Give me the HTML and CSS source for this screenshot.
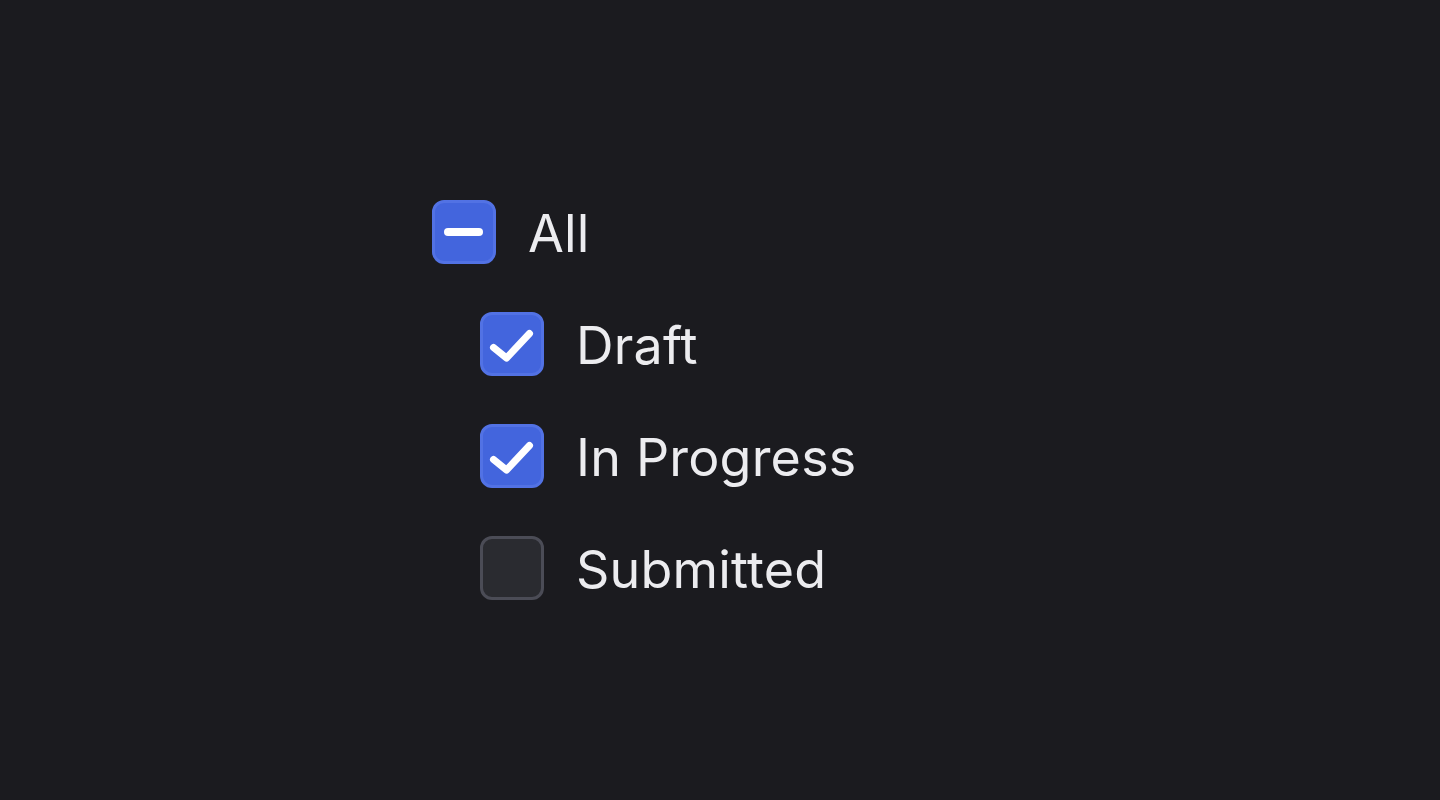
FILE: index.html
```html
<!DOCTYPE html>
<html lang="en">
<head>
<meta charset="utf-8">
<title>Checkbox group</title>
<link rel="stylesheet" href="styles.css">
</head>
<body>
<div class="page">
  <div class="group">
    <label class="row">
      <span class="box box-on">
        <svg viewBox="0 0 64 64" width="64" height="64"><rect x="12" y="28" width="39" height="8" rx="4" fill="#ffffff"/></svg>
      </span>
      <span class="label">All</span>
    </label>
    <div class="children">
      <label class="row">
        <span class="box box-on">
          <svg viewBox="0 0 64 64" width="64" height="64"><path d="M13.5 35.5 L26.5 46 L49.5 21.5" fill="none" stroke="#ffffff" stroke-width="7" stroke-linecap="round" stroke-linejoin="round"/></svg>
        </span>
        <span class="label">Draft</span>
      </label>
      <label class="row">
        <span class="box box-on">
          <svg viewBox="0 0 64 64" width="64" height="64"><path d="M13.5 35.5 L26.5 46 L49.5 21.5" fill="none" stroke="#ffffff" stroke-width="7" stroke-linecap="round" stroke-linejoin="round"/></svg>
        </span>
        <span class="label">In Progress</span>
      </label>
      <label class="row">
        <span class="box box-off"></span>
        <span class="label">Submitted</span>
      </label>
    </div>
  </div>
</div>
</body>
</html>
```
FILE: styles.css
```css
html, body {
  margin: 0;
  padding: 0;
  background: #1b1b1f;
}
.page {
  width: 1440px;
  height: 800px;
  box-sizing: border-box;
  padding: 200px 0 0 432px;
  font-family: Inter, "Open Sans", sans-serif;
  color: #ececef;
}
.group {
  display: flex;
  flex-direction: column;
  gap: 48px;
}
.children {
  display: flex;
  flex-direction: column;
  gap: 48px;
  padding-left: 48px;
}
.row {
  display: flex;
  align-items: flex-start;
  gap: 32px;
  height: 64px;
}
.box {
  position: relative;
  width: 64px;
  height: 64px;
  box-sizing: border-box;
  border-radius: 12px;
  flex: none;
}
.box svg {
  position: absolute;
  left: -3px;
  top: -3px;
}
.box-on {
  background: #4365dd;
  border: 3px solid #5272e4;
}
.box-off {
  background: #2a2b30;
  border: 3px solid #4b4c56;
}
.label {
  font-size: 52px;
  line-height: 68px;
  font-weight: 400;
  letter-spacing: 0.2px;
}
```
